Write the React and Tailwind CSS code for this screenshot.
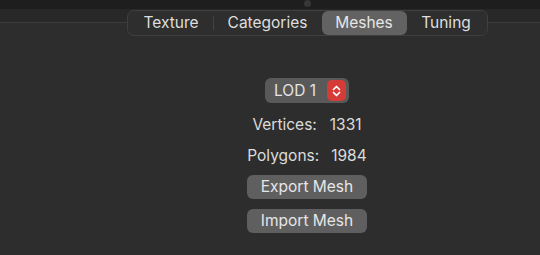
export default function App() {
  const font = { fontFamily: 'Inter, "Liberation Sans", sans-serif' };
  return (
    <div className="w-[540px] h-[255px] overflow-hidden bg-[#2d2d2d] relative" style={font}>
      <div className="h-[9px] bg-[#1e1e1e] relative">
        <div className="absolute left-[304px] top-[0px] w-[7px] h-[7px] rounded-full bg-[#363636]" />
      </div>
      <div className="w-[614px] flex flex-col items-center">
        <div className="relative w-full flex justify-center pt-[1px] h-[27px]">
          <div className="absolute left-0 right-0 top-0 h-[13px] bg-[#282828]" />
          <div className="absolute left-0 right-0 top-[13px] h-px bg-[#3c3c3c]" />
          <div className="relative z-10 w-[361px] h-[26px] rounded-[7px] bg-[#2e2e2e] border border-[#3f3f3f] flex items-center pl-[2px] pr-[1px] text-[15.5px] text-[#dedede]">
            <div className="w-[83px] text-center">Texture</div>
            <div className="w-px h-[14px] bg-[#444]" />
            <div className="w-[108px] text-center">Categories</div>
            <div className="w-[85px] h-[24px] rounded-[6px] bg-[#626262] flex items-center justify-center text-[#e6e6e6]">Meshes</div>
            <div className="flex-1 text-center">Tuning</div>
          </div>
        </div>
        <div className="mt-[42px] w-[84px] h-[25px] rounded-[6px] bg-[#595959] flex items-center pl-[9px] pr-[3px] text-[15.5px] text-[#e4e4e4]">
          <span className="flex-1">LOD 1</span>
          <div className="w-[19px] h-[21px] rounded-[5px] bg-[#d63c37] flex items-center justify-center">
            <svg width="9" height="12" viewBox="0 0 9 12" fill="none" stroke="#fff" strokeWidth="1.7" strokeLinecap="round" strokeLinejoin="round">
              <path d="M1.5 4.5 L4.5 1.5 L7.5 4.5" />
              <path d="M1.5 7.5 L4.5 10.5 L7.5 7.5" />
            </svg>
          </div>
        </div>
        <div className="mt-[12px] flex gap-[13px] text-[15.5px] text-[#dcdcdc] leading-[20px]"><span>Vertices:</span><span>1331</span></div>
        <div className="mt-[11px] flex gap-[12px] text-[15.5px] text-[#dcdcdc] leading-[20px]"><span>Polygons:</span><span>1984</span></div>
        <div className="mt-[9px] w-[120px] h-[24px] rounded-[6px] bg-[#5f5f5f] flex items-center justify-center text-[15.5px] text-[#e6e6e6]">Export Mesh</div>
        <div className="mt-[10px] w-[120px] h-[24px] rounded-[6px] bg-[#5f5f5f] flex items-center justify-center text-[15.5px] text-[#e6e6e6]">Import Mesh</div>
      </div>
    </div>
  );
}
